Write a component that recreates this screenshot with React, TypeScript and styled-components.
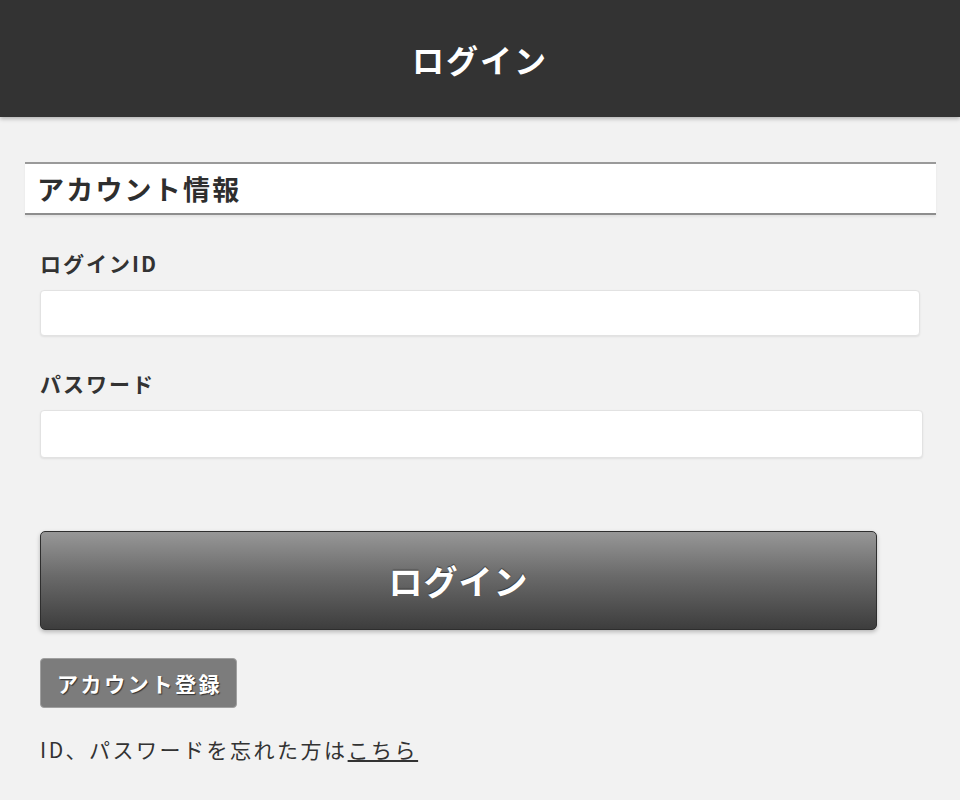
import React from 'react';
import styled, { createGlobalStyle } from 'styled-components';

const GlobalStyle = createGlobalStyle`
  body {
    margin: 0;
    background: #f2f2f2;
    font-family: "Noto Sans CJK JP", "Noto Sans", sans-serif;
    color: #333;
  }
`;

const Header = styled.header`
  height: 117px;
  background: #333333;
  display: flex;
  align-items: center;
  justify-content: center;
  box-shadow: 0 2px 4px rgba(0, 0, 0, 0.25);
`;

const HeaderTitle = styled.h1`
  margin: 0;
  color: #fff;
  font-size: 32px;
  font-weight: 700;
  letter-spacing: 2px;
`;

const Main = styled.main`
  padding: 45px 0 40px;
`;

const SectionHeading = styled.h2`
  margin: 0 24px 0 25px;
  height: 49px;
  display: flex;
  align-items: center;
  padding-left: 12px;
  background: #fff;
  border-top: 2px solid #9a9a9a;
  border-bottom: 2px solid #8e8e8e;
  box-shadow: 0 2px 2px rgba(0, 0, 0, 0.06);
  font-size: 27px;
  font-weight: 700;
  letter-spacing: 2.2px;
  color: #2e2e2e;
`;

const Form = styled.form`
  padding: 0 40px;
  display: flex;
  flex-direction: column;
  align-items: flex-start;
`;

const Label = styled.label<{ $top: number }>`
  margin-top: ${p => p.$top}px;
  font-size: 21px;
  font-weight: 700;
  line-height: 30px;
  letter-spacing: 2px;
  color: #333;
`;

const Input = styled.input<{ $width: number; $height: number }>`
  box-sizing: border-box;
  margin-top: 12px;
  width: ${p => p.$width}px;
  height: ${p => p.$height}px;
  background: #fff;
  border: 1px solid #e2e2e2;
  border-radius: 4px;
  box-shadow: 0 1px 2px rgba(0, 0, 0, 0.08);
  font-size: 20px;
  padding: 0 10px;
  outline: none;
`;

const LoginButton = styled.button`
  box-sizing: border-box;
  margin-top: 73px;
  width: 837px;
  height: 99px;
  border: 1px solid #2e2e2e;
  border-radius: 5px;
  background: linear-gradient(to bottom, #979797 0%, #6a6a6a 45%, #3d3d3d 100%);
  box-shadow: 0 2px 4px rgba(0, 0, 0, 0.25);
  color: #fff;
  font-family: inherit;
  font-size: 34px;
  font-weight: 700;
  letter-spacing: 1px;
  text-shadow: 0 -1px 1px rgba(0, 0, 0, 0.5);
  cursor: pointer;
`;

const RegisterButton = styled.button`
  box-sizing: border-box;
  margin-top: 28px;
  height: 50px;
  padding: 0 14px 0 16px;
  border: 1px solid #a0a0a0;
  border-radius: 4px;
  background: #7c7c7c;
  color: #fff;
  font-family: inherit;
  font-size: 21px;
  font-weight: 700;
  letter-spacing: 2.6px;
  text-shadow: 1px 1px 1px rgba(0, 0, 0, 0.6);
  cursor: pointer;
`;

const Note = styled.p`
  margin: 26px 0 0;
  font-size: 21px;
  line-height: 30px;
  letter-spacing: 2.5px;
  color: #333;
`;

const NoteLink = styled.a`
  color: #333;
  text-decoration: underline;
`;

const App: React.FC = () => {
  return (
    <>
      <GlobalStyle />
      <Header>
        <HeaderTitle>ログイン</HeaderTitle>
      </Header>
      <Main>
        <SectionHeading>アカウント情報</SectionHeading>
        <Form onSubmit={e => e.preventDefault()}>
          <Label $top={33} htmlFor="login-id">ログインID</Label>
          <Input id="login-id" type="text" $width={880} $height={46} />
          <Label $top={32} htmlFor="password">パスワード</Label>
          <Input id="password" type="password" $width={883} $height={48} />
          <LoginButton type="submit">ログイン</LoginButton>
          <RegisterButton type="button">アカウント登録</RegisterButton>
          <Note>
            ID、パスワードを忘れた方は<NoteLink href="#">こちら</NoteLink>
          </Note>
        </Form>
      </Main>
    </>
  );
};

export default App;
